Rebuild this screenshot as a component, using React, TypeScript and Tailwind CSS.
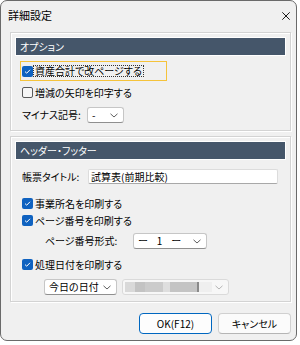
import React from 'react';

const jp = "font-['Noto_Sans_CJK_JP','Noto_Sans',sans-serif] [font-feature-settings:'palt']";

function Check({ on }: { on: boolean }) {
  if (!on) {
    return <span className="w-[11px] h-[11px] rounded-[2px] border border-[#5a5a5a] bg-[#f6f6f6] shrink-0" />;
  }
  return (
    <span className="w-[11px] h-[11px] rounded-[2px] bg-[#0f62c0] flex items-center justify-center shrink-0">
      <svg width="9" height="9" viewBox="0 0 9 9">
        <path d="M2 4.6 L3.7 6.2 L7 2.8" fill="none" stroke="#fff" strokeWidth="1" />
      </svg>
    </span>
  );
}

function Chevron({ color = '#5f5f5f' }: { color?: string }) {
  return (
    <svg width="8" height="5" viewBox="0 0 8 5" className="shrink-0">
      <polyline points="0.5,0.8 4,4 7.5,0.8" fill="none" stroke={color} strokeWidth="1" />
    </svg>
  );
}

function Select({ className, children }: { className: string; children?: React.ReactNode }) {
  return (
    <div className={`h-[16px] bg-white border border-[#c6c6c6] border-b-[#8f8f8f] rounded-[3px] flex items-center justify-between pl-[4px] pr-[5px] ${className}`}>
      <span className="text-[10px] leading-none text-black">{children}</span>
      <Chevron />
    </div>
  );
}

function Header({ title }: { title: string }) {
  return (
    <div className="h-[17px] bg-[#45566a] ring-1 ring-white flex items-center pl-[4px]">
      <span className="text-[10px] leading-none text-white">{title}</span>
    </div>
  );
}

const group = 'border border-[#d3d3d3] shadow-[inset_1px_1px_0_#fff,1px_1px_0_#fff] pt-[5px] px-[5px]';

export default function App() {
  return (
    <div className={`w-[300px] h-[345px] bg-white ${jp}`}>
      <div className="w-[297px] h-[341px] bg-[#f0f0f0] border border-[#6a6a6a] rounded-[7px] overflow-hidden flex flex-col">
        <div className="h-[31px] shrink-0 flex items-center justify-between pl-[7px] pr-[6px] pb-[2px]">
          <span className="text-[11px] leading-none text-black">詳細設定</span>
          <svg width="8" height="8" viewBox="0 0 8 8">
            <path d="M0.3 0.3 L7.7 7.7 M7.7 0.3 L0.3 7.7" stroke="#1a1a1a" strokeWidth="1" />
          </svg>
        </div>

        <div className="pl-[9px] w-[290px]">
          <div className={`${group} pb-[7px]`}>
            <Header title="オプション" />
            <div className="mt-[6px] ml-[4px] w-[147px] h-[20px] border border-[#f5c33b] flex items-center pl-[1px]">
              <Check on />
              <span className="border border-dotted border-[#333] h-[12px] flex items-center px-[1px] text-[10px] leading-none text-black">
                資産合計で改ページする
              </span>
            </div>
            <div className="mt-[3px] ml-[6px] h-[17px] flex items-center gap-[2px]">
              <Check on={false} />
              <span className="text-[10px] leading-none text-black">増減の矢印を印字する</span>
            </div>
            <div className="mt-[6px] ml-[6px] h-[16px] flex items-center">
              <span className="w-[65px] text-[10px] leading-none text-black">マイナス記号:</span>
              <Select className="w-[37px]">-</Select>
            </div>
          </div>

          <div className={`${group} mt-[5px] pb-[6px]`}>
            <Header title="ヘッダー・フッター" />
            <div className="mt-[10px] ml-[6px] h-[15px] flex items-center">
              <span className="w-[66px] text-[10px] leading-none text-black">帳票タイトル:</span>
              <div className="w-[190px] h-[15px] bg-white border border-[#dcdcdc] border-b-[#a8a8a8] rounded-[2px] flex items-center pl-[2px]">
                <span className="text-[10px] leading-none text-black">試算表(前期比較)</span>
              </div>
            </div>
            <div className="mt-[11px] ml-[6px] h-[17px] flex items-center gap-[2px]">
              <Check on />
              <span className="text-[10px] leading-none text-black">事業所名を印刷する</span>
            </div>
            <div className="ml-[6px] h-[17px] flex items-center gap-[2px]">
              <Check on />
              <span className="text-[10px] leading-none text-black">ページ番号を印刷する</span>
            </div>
            <div className="mt-[4px] ml-[29px] h-[16px] flex items-center">
              <span className="w-[88px] text-[10px] leading-none text-black">ページ番号形式:</span>
              <Select className="w-[74px]">
                <span className="inline-flex gap-[9px]"><span>ー</span><span>1</span><span>ー</span></span>
              </Select>
            </div>
            <div className="mt-[7px] ml-[6px] h-[17px] flex items-center gap-[2px]">
              <Check on />
              <span className="text-[10px] leading-none text-black">処理日付を印刷する</span>
            </div>
            <div className="mt-[6px] ml-[28px] h-[16px] flex items-center gap-[5px]">
              <Select className="w-[73px]">今日の日付</Select>
              <div className="w-[107px] h-[16px] bg-[#f7f7f7] border border-[#dadada] rounded-[3px] flex items-center justify-between pl-[2px] pr-[5px]">
                <div className="flex h-[10px] blur-[0.6px]">
                  <span className="w-[10px] bg-[#d9d9d9]" />
                  <span className="w-[10px] bg-[#c3c3c3]" />
                  <span className="w-[18px] bg-[#cbcbcb]" />
                  <span className="w-[7px] bg-[#dedede]" />
                  <span className="w-[27px] bg-[#c4c4c4]" />
                  <span className="w-[2px] bg-[#8a8a8a]" />
                  <span className="w-[13px] bg-[#efefef]" />
                </div>
                <Chevron color="#b5b5b5" />
              </div>
            </div>
          </div>

          <div className="mt-[11px] flex justify-end gap-[6px]">
            <button className="w-[73px] h-[21px] bg-[#fdfdfd] border border-[#0067c0] rounded-[4px] text-[10px] leading-none text-black">
              OK(F12)
            </button>
            <button className="w-[73px] h-[21px] bg-[#fbfbfb] border border-[#d0d0d0] border-b-[#b5b5b5] rounded-[4px] text-[10px] leading-none text-black">
              キャンセル
            </button>
          </div>
        </div>
      </div>
    </div>
  );
}
